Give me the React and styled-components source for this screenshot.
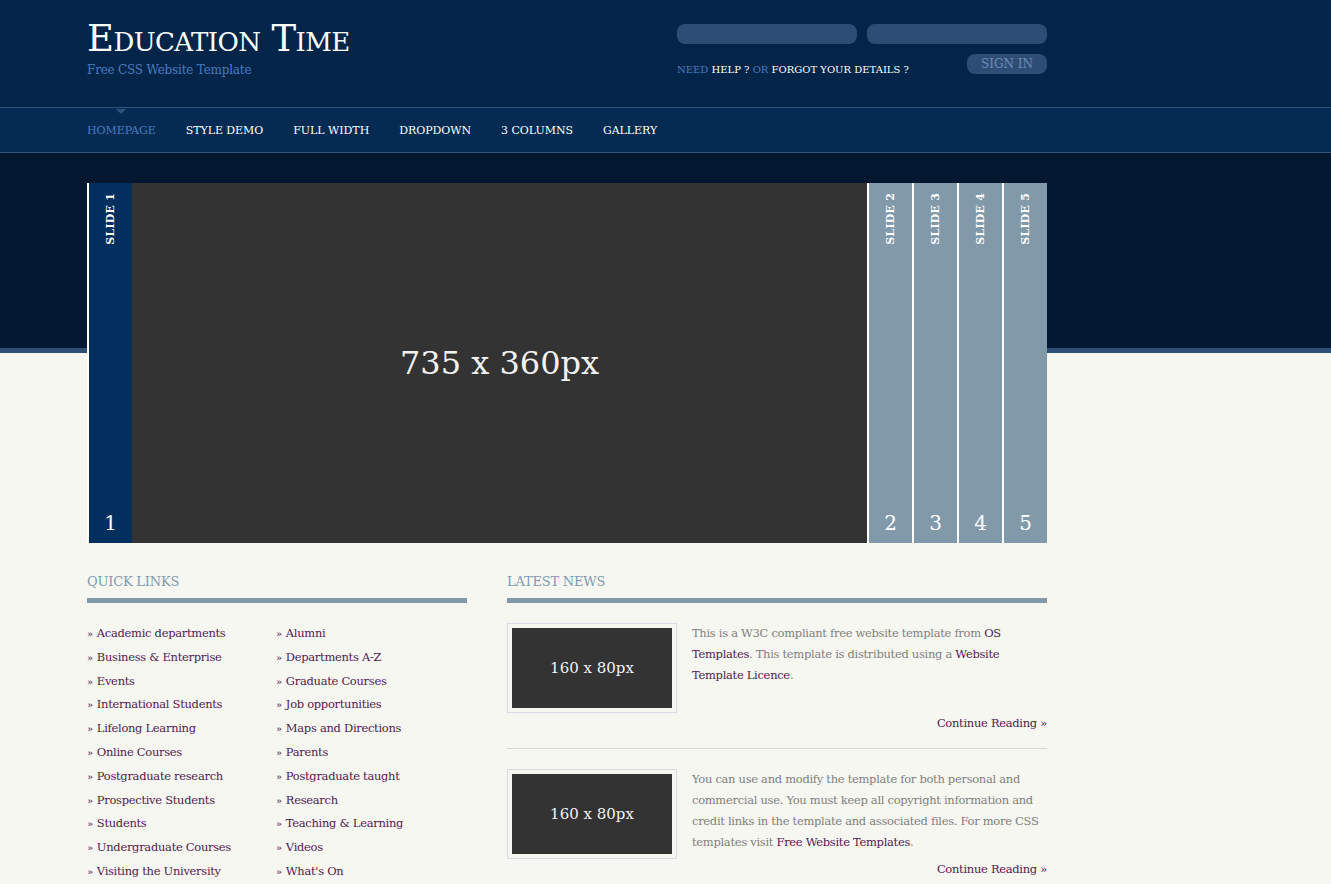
import React from "react";
import styled, { createGlobalStyle } from "styled-components";

const GlobalStyle = createGlobalStyle`
  html, body {
    margin: 0;
    padding: 0;
    background: #f7f7f2;
    font-family: "DejaVu Serif", Georgia, serif;
    font-size: 12px;
    color: #7b7b7b;
  }
  a { text-decoration: none; }
`;

const Wrap = styled.div`
  width: 960px;
  margin-left: 87px;
`;

const Header = styled.header`
  background: #032549;
  height: 107px;
`;

const HeaderInner = styled(Wrap)`
  display: flex;
  justify-content: space-between;
  align-items: flex-start;
`;

const Brand = styled.div`
  padding-top: 17px;

  h1 {
    margin: 0;
    font-size: 37px;
    font-weight: normal;
    font-variant: small-caps;
    color: #ffffff;
    line-height: 44px;
    letter-spacing: -0.6px;
  }

  p {
    margin: 2px 0 0;
    font-size: 12px;
    letter-spacing: -0.2px;
    color: #4a7cc0;
  }
`;

const Login = styled.form`
  width: 370px;
  padding-top: 24px;
  display: grid;
  grid-template-columns: 1fr 80px;
  row-gap: 10px;
`;

const Inputs = styled.div`
  grid-column: 1 / 3;
  display: flex;
  gap: 10px;
`;

const Field = styled.input`
  width: 180px;
  height: 20px;
  border: none;
  border-radius: 8px;
  background: #2e4d74;
  padding: 0;
  outline: none;
`;

const LoginHelp = styled.p`
  margin: 0;
  padding-top: 10px;
  font-size: 10px;
  color: #4a7cc0;
  text-transform: uppercase;

  a { color: #ffffff; }
`;

const SignIn = styled.button`
  height: 20px;
  border: none;
  border-radius: 8px;
  background: #2e4d74;
  color: #6a8cb8;
  font-family: "DejaVu Serif", Georgia, serif;
  font-size: 12px;
  text-transform: uppercase;
  padding: 0;
`;

const Nav = styled.nav`
  background: #052b52;
  border-top: 1px solid #2f5378;
  border-bottom: 1px solid #2f5378;
`;

const NavList = styled.ul`
  list-style: none;
  margin: 0 0 0 87px;
  padding: 0;
  display: flex;
  gap: 30px;
  height: 44px;
  align-items: center;
`;

const NavItem = styled.li`
  position: relative;
  font-size: 11px;
  letter-spacing: -0.05px;
  text-transform: uppercase;
  color: ${({ $active }) => ($active ? "#4a7cc0" : "#ffffff")};

  &::before {
    content: "";
    display: ${({ $active }) => ($active ? "block" : "none")};
    position: absolute;
    top: -15px;
    left: 29px;
    border-left: 5px solid transparent;
    border-right: 5px solid transparent;
    border-top: 5px solid #2f5378;
  }
`;

const Hero = styled.section`
  padding-top: 30px;
  background: linear-gradient(
    to bottom,
    #041730 0,
    #041730 195px,
    #2e5077 195px,
    #2e5077 200px,
    #f7f7f2 200px
  );
`;

const Slider = styled(Wrap)`
  display: flex;
  height: 360px;
`;

const Tab = styled.div`
  width: 43px;
  border-left: 2px solid #ffffff;
  background: ${({ $active }) => ($active ? "#022f5e" : "#8299aa")};
  display: flex;
  flex-direction: column;
  align-items: center;
  justify-content: space-between;
  padding: 10px 0 8px;
  box-sizing: content-box;
  color: #ffffff;
`;

const TabLabel = styled.span`
  writing-mode: vertical-rl;
  transform: rotate(180deg);
  font-size: 11px;
  font-weight: bold;
  text-transform: uppercase;
  letter-spacing: 0.2px;
`;

const TabNumber = styled.span`
  font-size: 20px;
  line-height: 24px;
`;

const Placeholder = styled.div`
  background: #333333;
  color: #f2f2f2;
  display: flex;
  align-items: center;
  justify-content: center;
  width: ${({ $w }) => $w}px;
  height: ${({ $h }) => $h}px;
  font-size: ${({ $size }) => $size}px;
  flex-shrink: 0;
`;

const Content = styled(Wrap)`
  display: flex;
  gap: 40px;
  padding-top: 30px;
`;

const Column = styled.div`
  width: ${({ $w }) => $w}px;
`;

const Heading = styled.h2`
  margin: 0 0 ${({ $gap }) => $gap}px;
  padding-bottom: 8px;
  border-bottom: 5px solid #8299aa;
  font-size: 13px;
  font-weight: normal;
  color: #7f9aae;
  text-transform: uppercase;
  line-height: 17px;
  letter-spacing: -0.2px;
`;

const Links = styled.ul`
  list-style: none;
  margin: 0;
  padding: 0;
  display: grid;
  grid-template-columns: 189px 189px;
  grid-auto-flow: column;
  grid-template-rows: repeat(11, 23.8px);
`;

const LinkItem = styled.li`
  font-size: 11.5px;
  letter-spacing: -0.3px;
  line-height: 23.8px;
  white-space: nowrap;

  &::before {
    content: "»";
    color: #521a4e;
    font-size: 10px;
    margin-right: 4px;
  }

  a { color: #521a4e; }
`;

const NewsItem = styled.article`
  padding: ${({ $first }) => ($first ? "0" : "20px")} 0 15px;
  border-bottom: ${({ $last }) => ($last ? "none" : "1px solid #d7d7d7")};
`;

const NewsBody = styled.div`
  display: flex;
  gap: 15px;
  align-items: flex-start;
`;

const Thumb = styled.div`
  padding: 4px;
  border: 1px solid #d8dde3;
`;

const NewsText = styled.p`
  margin: 0;
  font-size: 11.5px;
  letter-spacing: -0.3px;
  line-height: 21px;
  color: #7f7f7f;

  a { color: #521a4e; }
`;

const More = styled.a`
  display: block;
  text-align: right;
  font-size: 11.5px;
  letter-spacing: -0.3px;
  line-height: 20px;
  color: #521a4e;
`;

const navItems = ["Homepage", "Style Demo", "Full Width", "DropDown", "3 Columns", "Gallery"];

const quickLinks = [
  "Academic departments",
  "Business & Enterprise",
  "Events",
  "International Students",
  "Lifelong Learning",
  "Online Courses",
  "Postgraduate research",
  "Prospective Students",
  "Students",
  "Undergraduate Courses",
  "Visiting the University",
  "Alumni",
  "Departments A-Z",
  "Graduate Courses",
  "Job opportunities",
  "Maps and Directions",
  "Parents",
  "Postgraduate taught",
  "Research",
  "Teaching & Learning",
  "Videos",
  "What's On",
];

const SlideTab = ({ n, active }) => (
  <Tab $active={active}>
    <TabLabel>Slide {n}</TabLabel>
    <TabNumber>{n}</TabNumber>
  </Tab>
);

export default function App() {
  return (
    <>
      <GlobalStyle />
      <Header>
        <HeaderInner>
          <Brand>
            <h1>Education Time</h1>
            <p>Free CSS Website Template</p>
          </Brand>
          <Login onSubmit={(e) => e.preventDefault()}>
            <Inputs>
              <Field type="text" />
              <Field type="password" />
            </Inputs>
            <LoginHelp>
              Need <a href="#">Help ?</a> or <a href="#">Forgot your details ?</a>
            </LoginHelp>
            <SignIn type="submit">Sign In</SignIn>
          </Login>
        </HeaderInner>
      </Header>
      <Nav>
        <NavList>
          {navItems.map((item, i) => (
            <NavItem key={item} $active={i === 0}>
              {item}
            </NavItem>
          ))}
        </NavList>
      </Nav>
      <Hero>
        <Slider>
          <SlideTab n={1} active />
          <Placeholder $w={735} $h={360} $size={32}>
            735 x 360px
          </Placeholder>
          {[2, 3, 4, 5].map((n) => (
            <SlideTab key={n} n={n} />
          ))}
        </Slider>
      </Hero>
      <Content>
        <Column $w={380}>
          <Heading $gap={19}>Quick Links</Heading>
          <Links>
            {quickLinks.map((l) => (
              <LinkItem key={l}>
                <a href="#">{l}</a>
              </LinkItem>
            ))}
          </Links>
        </Column>
        <Column $w={540}>
          <Heading $gap={20}>Latest News</Heading>
          <NewsItem $first>
            <NewsBody>
              <Thumb>
                <Placeholder $w={160} $h={80} $size={15}>
                  160 x 80px
                </Placeholder>
              </Thumb>
              <NewsText>
                This is a W3C compliant free website template from <a href="#">OS Templates</a>. This
                template is distributed using a <a href="#">Website Template Licence</a>.
              </NewsText>
            </NewsBody>
            <More href="#">Continue Reading »</More>
          </NewsItem>
          <NewsItem $last>
            <NewsBody>
              <Thumb>
                <Placeholder $w={160} $h={80} $size={15}>
                  160 x 80px
                </Placeholder>
              </Thumb>
              <NewsText>
                You can use and modify the template for both personal and commercial use. You must
                keep all copyright information and credit links in the template and associated
                files. For more CSS templates visit <a href="#">Free Website Templates</a>.
              </NewsText>
            </NewsBody>
            <More href="#">Continue Reading »</More>
          </NewsItem>
        </Column>
      </Content>
    </>
  );
}
